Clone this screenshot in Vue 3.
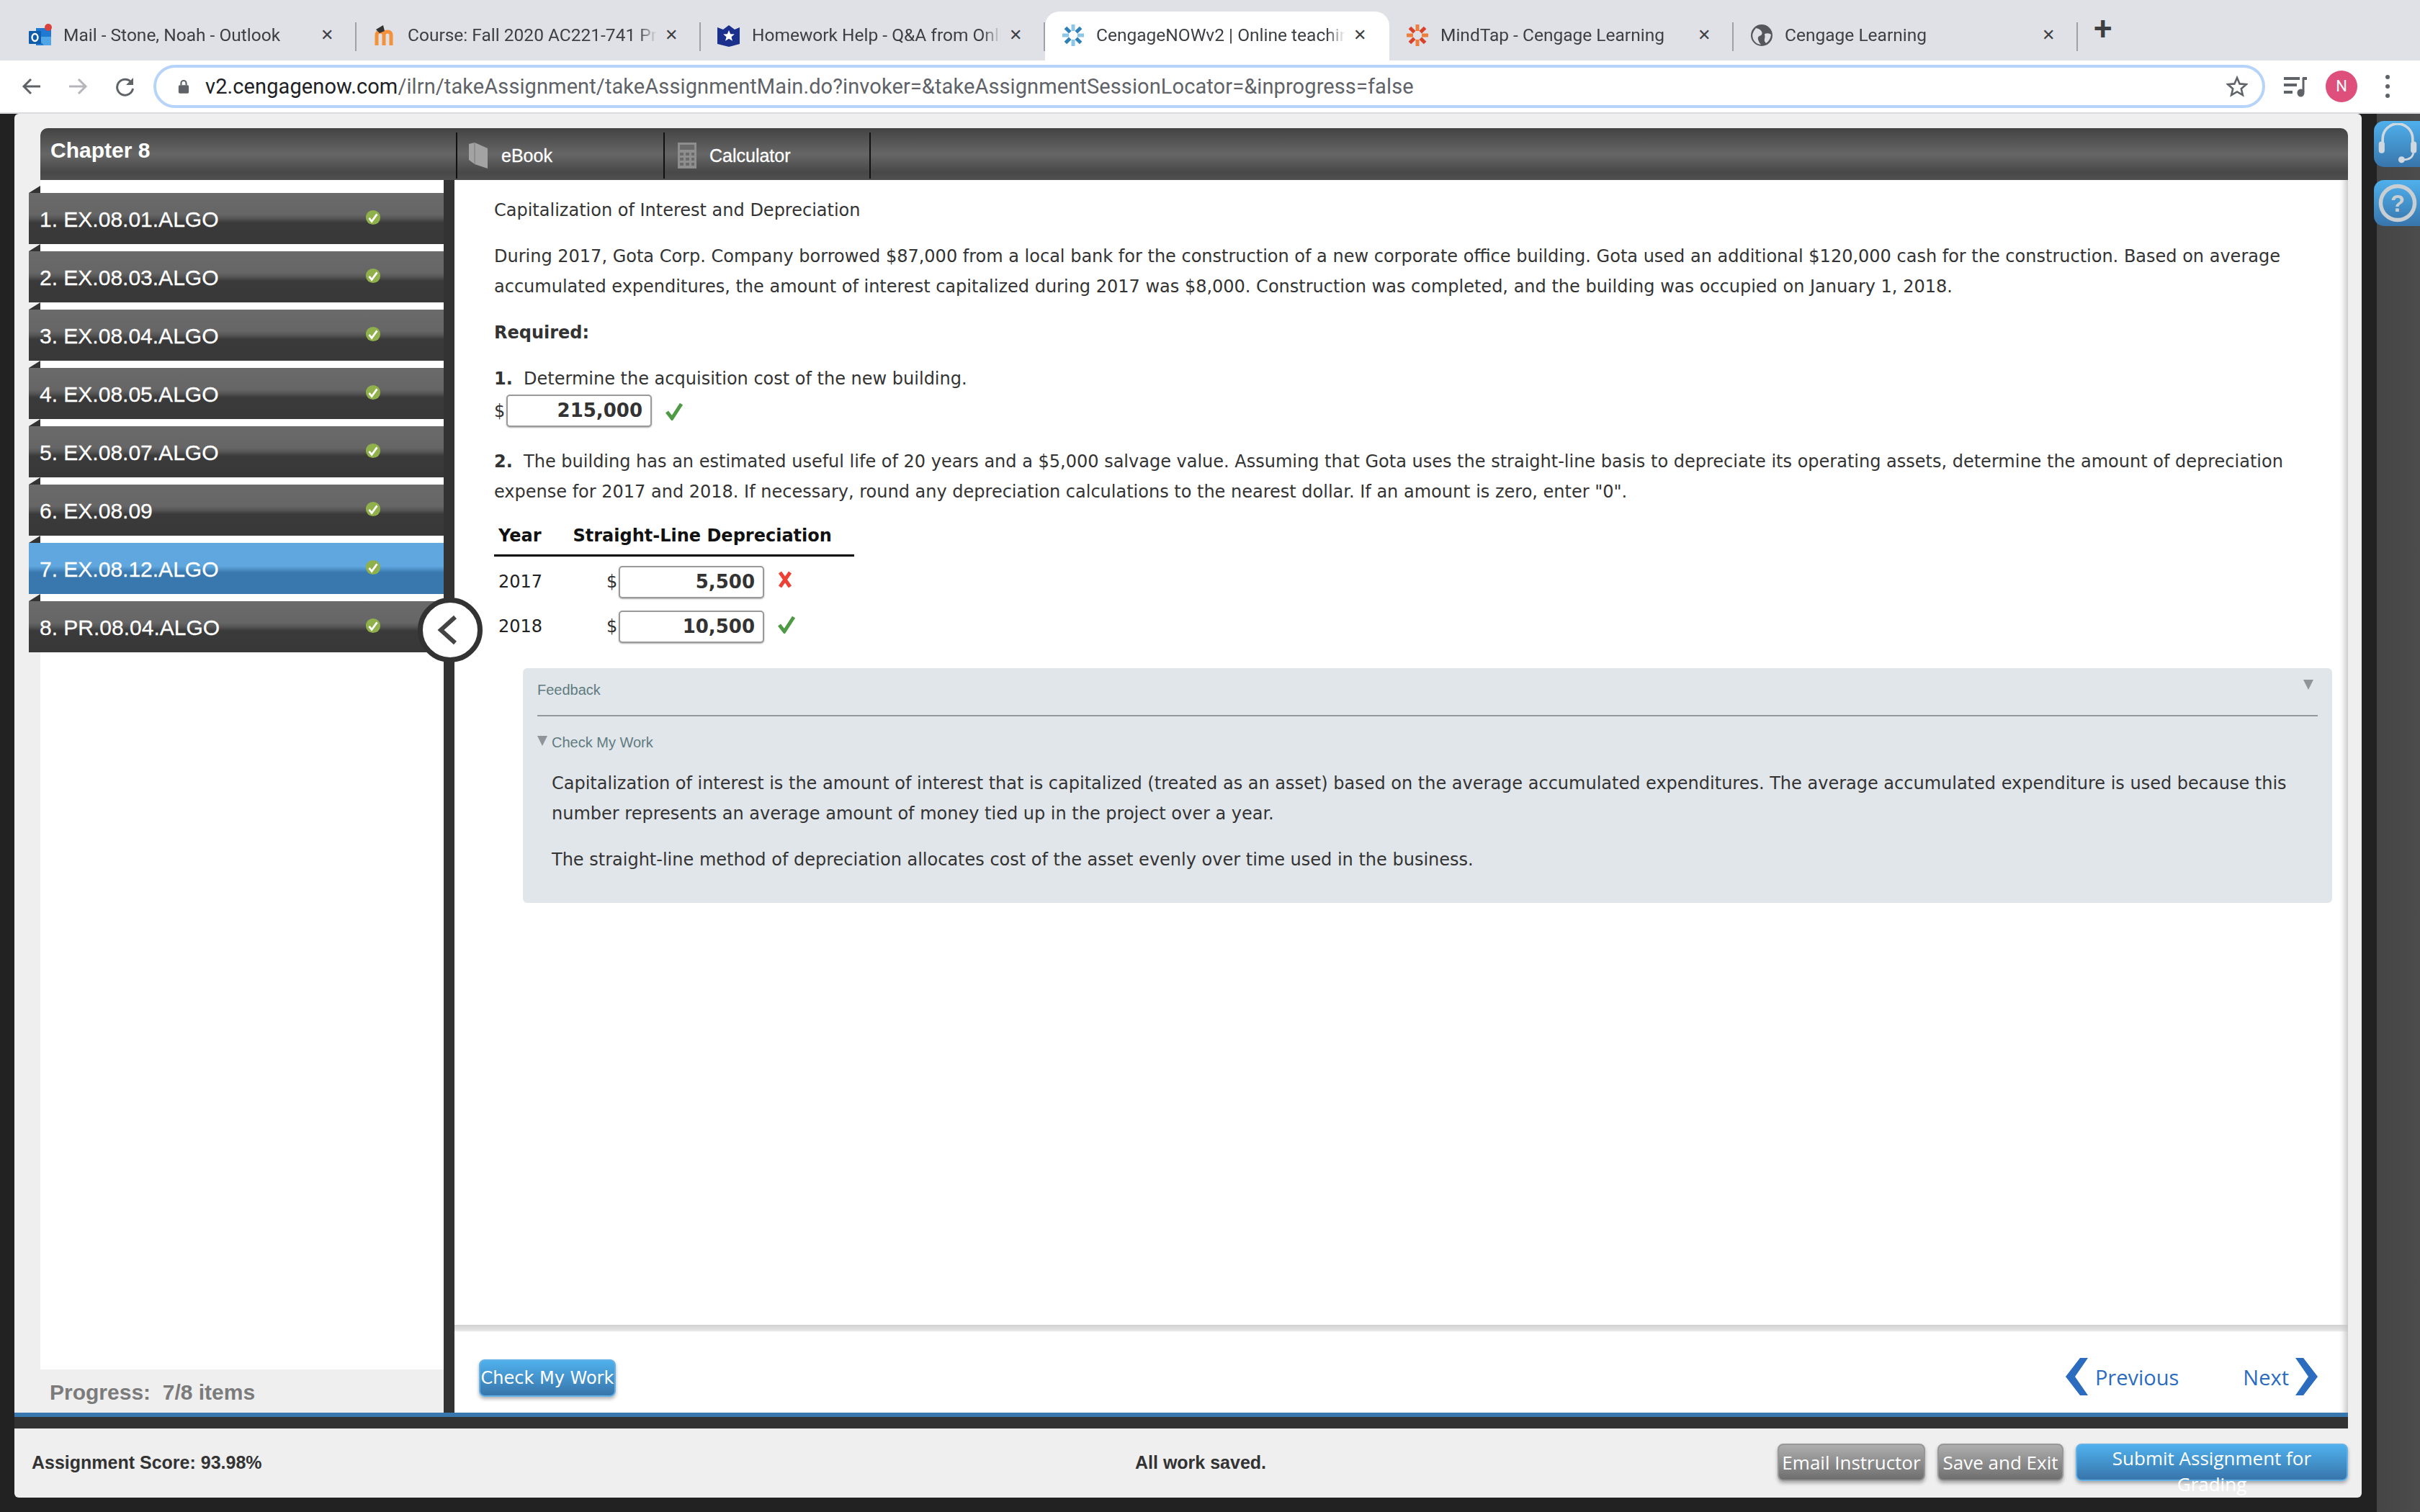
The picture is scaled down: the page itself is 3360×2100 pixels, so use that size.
<script setup>
import { ref } from 'vue';

const tabs = ref([
  { title: 'Mail - Stone, Noah - Outlook', icon: 'outlook' },
  { title: 'Course: Fall 2020 AC221-741 Principles', icon: 'moodle' },
  { title: 'Homework Help - Q&A from Online Tutors', icon: 'shield' },
  { title: 'CengageNOWv2 | Online teaching', icon: 'spark', active: true },
  { title: 'MindTap - Cengage Learning', icon: 'sparkred' },
  { title: 'Cengage Learning', icon: 'globe' },
]);

const items = ref([
  '1. EX.08.01.ALGO',
  '2. EX.08.03.ALGO',
  '3. EX.08.04.ALGO',
  '4. EX.08.05.ALGO',
  '5. EX.08.07.ALGO',
  '6. EX.08.09',
  '7. EX.08.12.ALGO',
  '8. PR.08.04.ALGO',
]);

const sparkAngles = [0, 45, 90, 135, 180, 225, 270, 315];
</script>

<template>
  <div class="screen">
    <div class="tabstrip">
      <div v-for="tab in tabs" :key="tab.title" class="tab" :class="{ active: tab.active }">
        <svg class="favicon" viewBox="0 0 32 32">
          <template v-if="tab.icon === 'outlook'">
            <rect x="10" y="6" width="21" height="24" fill="#1f78d1" />
            <path d="M10 18l11 12h10V18z" fill="#50a5e6" />
            <rect x="0" y="10" width="17" height="18" rx="1" fill="#0f5ca8" />
            <ellipse cx="8.5" cy="19" rx="4" ry="5" fill="none" stroke="#fff" stroke-width="2.4" />
            <circle cx="27" cy="5" r="5" fill="#d9423c" />
          </template>
          <template v-else-if="tab.icon === 'moodle'">
            <path d="M5 30V16q0-5 5-5t5 5v14M15 16q0-5 5-5t5 5v14" fill="none" stroke="#f3923a" stroke-width="5" />
            <path d="M4 8l10-6 2 8-7 3z" fill="#333" />
          </template>
          <template v-else-if="tab.icon === 'shield'">
            <path d="M0 5l8 3 8-6 8 6 7-3v23l-15 4-16-4z" fill="#1b2f8c" />
            <path d="M16 9l2.2 5.2 5.6.4-4.3 3.6 1.4 5.5L16 20.800l-4.900 2.900 1.400-5.500-4.300-3.600 5.600-.4z" fill="#fff" />
          </template>
          <template v-else-if="tab.icon === 'spark' || tab.icon === 'sparkred'">
            <rect
              v-for="a in sparkAngles"
              :key="a"
              x="13.500"
              y="1"
              width="5"
              height="9"
              :fill="tab.icon === 'spark' ? (a % 90 ? '#2f7fb8' : '#8cc6e8') : (a % 90 ? '#d9412b' : '#ef7d3c')"
              :transform="`rotate(${a} 16 16)`"
            />
          </template>
          <template v-else>
            <circle cx="16" cy="16" r="15" fill="#54575c" />
            <path d="M8 6q6 1 8 5t-3 6q-3 1-2 5t4 7q-8-1-11-8t4-15zM20 14q6-2 9 1-1 8-7 12-3-3-2-6t0-7z" fill="#dfe1e6" />
          </template>
        </svg>
        <span class="tab-title">{{ tab.title }}</span>
        <span class="tab-close">✕</span>
      </div>
      <span class="newtab">+</span>
    </div>

    <div class="toolbar">
      <svg class="nav-icon" viewBox="0 0 28 28">
        <path d="M26 14H4M13 4L3 14l10 10" fill="none" stroke="#5f6368" stroke-width="3" />
      </svg>
      <svg class="nav-icon fwd" viewBox="0 0 28 28">
        <path d="M2 14h22M15 4l10 10-10 10" fill="none" stroke="#b4b6b9" stroke-width="3" />
      </svg>
      <svg class="nav-icon reload" viewBox="0 0 28 28">
        <path d="M23 8a11 11 0 1 0 2.500 9" fill="none" stroke="#5f6368" stroke-width="3" />
        <path d="M26 2v10H16z" fill="#5f6368" />
      </svg>
      <div class="omnibox">
        <svg class="lock" viewBox="0 0 18 24">
          <path d="M5 10V7a4 4 0 0 1 8 0v3" fill="none" stroke="#5f6368" stroke-width="2.400" />
          <rect x="1" y="10" width="16" height="13" rx="2" fill="#5f6368" />
        </svg>
        <span class="url"><b>v2.cengagenow.com</b>/ilrn/takeAssignment/takeAssignmentMain.do?invoker=&amp;takeAssignmentSessionLocator=&amp;inprogress=false</span>
        <svg class="star" viewBox="0 0 30 30">
          <path d="M15 3l3.600 8.400 9.100.8-6.900 6 2.100 8.900L15 22.400l-7.900 4.700 2.100-8.900-6.900-6 9.100-.8z" fill="none" stroke="#5f6368" stroke-width="2.600" />
        </svg>
      </div>
      <svg class="queue" viewBox="0 0 32 32">
        <path d="M0 3h22v4H0zM0 12h18v4H0zM0 22h12v4H0z" fill="#5f6368" />
        <path d="M27 4v20" stroke="#5f6368" stroke-width="3" />
        <path d="M26 3h6v4h-6z" fill="#5f6368" />
        <ellipse cx="23.500" cy="25" rx="5" ry="5.500" fill="#5f6368" />
      </svg>
      <span class="avatar">N</span>
      <span class="menu"><i></i><i></i><i></i></span>
    </div>

    <div class="page">
      <div class="panel">
        <div class="header">
          <div class="chapter">Chapter 8</div>
          <div class="tool ebook">
            <svg class="tool-icon" viewBox="0 0 26 36">
              <path d="M0 2l8-2 18 8v28L8 30 0 24z" fill="#a3a3a3" />
              <path d="M8 0v30" stroke="#777" stroke-width="1" />
            </svg>
            <span>eBook</span>
          </div>
          <div class="tool calc">
            <svg class="tool-icon" viewBox="0 0 26 36">
              <rect width="26" height="36" fill="#8e8e8e" />
              <rect x="3" y="3" width="20" height="7" fill="#6a6a6a" />
              <path d="M3 14h5v4H3zM11 14h5v4h-5zM19 14h4v4h-4zM3 21h5v4H3zM11 21h5v4h-5zM19 21h4v4h-4zM3 28h5v4H3zM11 28h5v4h-5zM19 28h4v4h-4z" fill="#6a6a6a" />
            </svg>
            <span>Calculator</span>
          </div>
        </div>

        <div class="workspace">
          <aside class="sidebar">
            <div class="list">
              <div v-for="(item, i) in items" :key="item" class="item" :class="{ current: i === 6 }">
                <span class="item-label">{{ item }}</span>
                <svg class="done" viewBox="0 0 24 24">
                  <circle cx="12" cy="12" r="11" fill="#8fb04a" />
                  <path d="M6 13l4 5 8-11" fill="none" stroke="#fff" stroke-width="3" />
                </svg>
              </div>
            </div>
            <div class="progress">Progress:&nbsp; 7/8 items</div>
          </aside>

          <main class="main">
            <div class="question">
              <p class="line">Capitalization of Interest and Depreciation</p>
              <p class="line gap">During 2017, Gota Corp. Company borrowed $87,000 from a local bank for the construction of a new corporate office building. Gota used an additional $120,000 cash for the construction. Based on average accumulated expenditures, the amount of interest capitalized during 2017 was $8,000. Construction was completed, and the building was occupied on January 1, 2018.</p>
              <p class="line gap"><b>Required:</b></p>
              <p class="line gap"><b>1.</b>&nbsp; Determine the acquisition cost of the new building.</p>
              <div class="answer single">
                <span class="dollar">$</span><span class="field">215,000</span>
                <svg class="mark" viewBox="0 0 24 24"><path d="M2 13l7 9L22 2" fill="none" stroke="#4f9a44" stroke-width="5" /></svg>
              </div>
              <p class="line part">
                <b>2.</b>&nbsp; The building has an estimated useful life of 20 years and a $5,000 salvage value. Assuming that Gota uses the straight-line basis to depreciate its operating assets, determine the amount of depreciation expense for 2017 and 2018. If necessary, round any depreciation calculations to the nearest dollar. If an amount is zero, enter "0".
              </p>
              <div class="table">
                <div class="thead"><b>Year</b><b>Straight-Line Depreciation</b></div>
                <div class="row">
                  <span class="year">2017</span>
                  <span class="dollar">$</span><span class="field">5,500</span>
                  <svg class="mark wrong" viewBox="0 0 20 24"><path d="M3 2l14 20M17 2L3 22" fill="none" stroke="#ee4136" stroke-width="5" /></svg>
                </div>
                <div class="row">
                  <span class="year">2018</span>
                  <span class="dollar">$</span><span class="field">10,500</span>
                  <svg class="mark" viewBox="0 0 24 24"><path d="M2 13l7 9L22 2" fill="none" stroke="#4f9a44" stroke-width="5" /></svg>
                </div>
              </div>

              <section class="feedback">
                <div class="fb-head"><span>Feedback</span><i class="tri"></i></div>
                <div class="fb-sub"><i class="tri"></i><span>Check My Work</span></div>
                <p class="line">Capitalization of interest is the amount of interest that is capitalized (treated as an asset) based on the average accumulated expenditures. The average accumulated expenditure is used because this number represents an average amount of money tied up in the project over a year.</p>
                <p class="line gap">The straight-line method of depreciation allocates cost of the asset evenly over time used in the business.</p>
              </section>
            </div>

            <div class="nav">
              <button class="btn blue check" type="button">Check My Work</button>
              <div class="pager">
                <svg class="chev" viewBox="0 0 31 52"><path d="M20 0h11L13 26l18 26H20L0 26z" fill="#2b6cbf" /></svg>
                <a class="prev">Previous</a>
                <a class="next">Next</a>
                <svg class="chev" viewBox="0 0 31 52"><path d="M11 0H0l18 26L0 52h11l20-26z" fill="#2b6cbf" /></svg>
              </div>
            </div>
          </main>

          <button class="collapse" type="button" aria-label="Collapse">
            <svg viewBox="0 0 30 44"><path d="M25 4L5 22l20 18" fill="none" stroke="#444" stroke-width="6" /></svg>
          </button>
        </div>

        <div class="strip"></div>

        <footer class="footer">
          <strong class="score">Assignment Score: 93.98%</strong>
          <strong class="saved">All work saved.</strong>
          <div class="actions">
            <button class="btn gray email" type="button">Email Instructor</button>
            <button class="btn gray save" type="button">Save and Exit</button>
            <button class="btn blue submit" type="button">Submit Assignment for Grading</button>
          </div>
        </footer>
      </div>

      <div class="rail">
        <button class="side-btn" type="button" aria-label="Support">
          <svg viewBox="0 0 64 64">
            <path d="M9 34V24a23 23 0 0 1 46 0v10" fill="none" stroke="#cfd8de" stroke-width="4" />
            <rect x="3" y="28" width="9" height="18" rx="4" fill="#cfd8de" />
            <rect x="52" y="28" width="9" height="18" rx="4" fill="#cfd8de" />
            <path d="M56 46q-2 10-15 10" fill="none" stroke="#cfd8de" stroke-width="3" />
            <circle cx="38" cy="56" r="5" fill="#cfd8de" />
          </svg>
        </button>
        <button class="side-btn" type="button" aria-label="Help">
          <svg viewBox="0 0 64 64">
            <circle cx="32" cy="32" r="26" fill="none" stroke="#c9ced2" stroke-width="6" />
            <text x="32" y="45" text-anchor="middle" class="qmark">?</text>
          </svg>
        </button>
      </div>
    </div>
  </div>
</template>

<style>
html,
body {
  margin: 0;
  background: #222;
}
</style>

<style scoped>
.screen {
  width: 3360px;
  height: 2100px;
  display: flex;
  flex-direction: column;
  overflow: hidden;
  font-family: "DejaVu Sans", sans-serif;
  color: #333;
}

/* browser chrome */
.tabstrip {
  height: 84px;
  flex: none;
  display: flex;
  align-items: flex-end;
  box-sizing: border-box;
  padding-left: 17px;
  background: #dfe1e6;
  font-family: Roboto, "Liberation Sans", sans-serif;
}
.tab {
  width: 478px;
  height: 68px;
  flex: none;
  box-sizing: border-box;
  display: flex;
  align-items: center;
  padding: 0 22px 0 23px;
  position: relative;
  font-size: 24.500px;
  color: #3c4043;
}
.tab::after {
  content: "";
  position: absolute;
  right: 0;
  top: 15px;
  height: 40px;
  width: 2px;
  background: #9ea1a6;
}
.tab.active {
  background: #fff;
  border-radius: 20px 20px 0 0;
}
.tab.active::after {
  display: none;
}
.favicon {
  width: 32px;
  height: 32px;
  flex: none;
  margin-top: -2px;
}
.tab-title {
  flex: 1;
  min-width: 0;
  margin-left: 16px;
  margin-right: 10px;
  margin-top: -3px;
  white-space: nowrap;
  overflow: hidden;
  -webkit-mask-image: linear-gradient(to left, transparent 0, #000 26px);
  mask-image: linear-gradient(to left, transparent 0, #000 26px);
}
.tab-close {
  width: 20px;
  flex: none;
  margin-right: 9px;
  margin-top: -3px;
  font-size: 22px;
  text-align: center;
  color: #3c4043;
}
.newtab {
  margin: 0 0 15px 22px;
  font-size: 46px;
  line-height: 60px;
  font-weight: 500;
  color: #3c4043;
}

.toolbar {
  height: 74px;
  flex: none;
  box-sizing: border-box;
  border-bottom: 2px solid #dadce0;
  background: #fff;
  display: flex;
  align-items: center;
  padding-left: 30px;
}
.nav-icon {
  width: 28px;
  height: 28px;
  flex: none;
}
.fwd {
  margin-left: 36px;
}
.reload {
  margin-left: 37px;
}
.omnibox {
  width: 932px;
  flex: 1 0 auto;
  max-width: 2932px;
  height: 60px;
  margin-left: 26px;
  box-sizing: border-box;
  border: 4px solid #b6d3f9;
  border-radius: 30px;
  display: flex;
  align-items: center;
  padding-left: 30px;
  font-family: Roboto, "Liberation Sans", sans-serif;
}
.lock {
  width: 16px;
  height: 22px;
  flex: none;
}
.url {
  margin-left: 22px;
  flex: 1;
  font-size: 29px;
  letter-spacing: 0.1px;
  color: #5f6368;
  white-space: nowrap;
}
.url b {
  font-weight: 400;
  color: #202124;
}
.star {
  width: 30px;
  height: 30px;
  margin-right: 20px;
  flex: none;
}
.queue {
  width: 32px;
  height: 32px;
  flex: none;
  margin-left: 26px;
}
.avatar {
  width: 44px;
  height: 44px;
  flex: none;
  margin-left: 26px;
  border-radius: 50%;
  background: #de4f7c;
  color: #fff;
  font: 400 22px/44px Roboto, sans-serif;
  text-align: center;
}
.menu {
  margin-left: 39px;
  width: 6px;
  flex: none;
  display: flex;
  flex-direction: column;
  gap: 7px;
}
.menu i {
  width: 6px;
  height: 6px;
  border-radius: 50%;
  background: #5f6368;
}

/* page */
.page {
  flex: 1;
  min-height: 0;
  display: flex;
  background: linear-gradient(to right, #222 0, #222 3300px, #454545 3300px, #4c4c4c 3360px);
}
.panel {
  width: 3259px;
  height: 1922px;
  margin-left: 20px;
  flex: none;
  background: #efefef;
  border-radius: 6px;
  display: flex;
  flex-direction: column;
  padding: 20px 19px 0 0;
  box-sizing: border-box;
}
.header {
  height: 72px;
  flex: none;
  margin-left: 36px;
  display: flex;
  border-radius: 10px 10px 0 0;
  background: linear-gradient(#434343 0, #666 50%, #484848 85%, #505050 100%);
  color: #fff;
  font-family: "Liberation Sans", sans-serif;
}
.chapter {
  width: 577px;
  box-sizing: border-box;
  flex: none;
  padding: 14px 0 0 14px;
  font-size: 30px;
  line-height: 34px;
  font-weight: 700;
}
.tool {
  width: 288px;
  height: 64px;
  margin-top: 6px;
  flex: none;
  box-sizing: border-box;
  border-left: 2px solid #111;
  display: flex;
  align-items: center;
  font-size: 25px;
  font-weight: 400;
  -webkit-text-stroke: 0.3px #fff;
}
.tool.calc {
  border-right: 2px solid #111;
}
.tool-icon {
  width: 26px;
  height: 36px;
  flex: none;
  margin-left: 16px;
  margin-right: 18px;
}
.tool.calc .tool-icon {
  margin-left: 18px;
  margin-right: 18px;
}
.tool.ebook span {
  margin-left: 1px;
}

.workspace {
  flex: 1;
  min-height: 0;
  display: flex;
  position: relative;
}
.sidebar {
  width: 596px;
  flex: none;
  display: flex;
  flex-direction: column;
  box-sizing: border-box;
  padding-left: 36px;
  font-family: "Liberation Sans", sans-serif;
}
.list {
  flex: 1;
  background: #fff;
  padding-top: 18px;
  display: flex;
  flex-direction: column;
  gap: 10px;
}
.item {
  margin-left: -16px;
  height: 71px;
  flex: none;
  position: relative;
  display: flex;
  align-items: center;
  padding: 0 0 0 15px;
  background: linear-gradient(#6a6a6a 0, #666 42%, #555 50%, #3a3a3a 58%, #383838 100%);
  color: #fff;
  font-size: 30px;
  -webkit-text-stroke: 0.3px #fff;
}
.item::before {
  content: "";
  position: absolute;
  left: 0;
  top: -10px;
  border-left: 16px solid transparent;
  border-bottom: 10px solid #333;
  width: 0;
  height: 0;
}
.item.current {
  background: linear-gradient(#5fa7de 0, #5fa7de 46%, #3878ae 58%, #3878ae 100%);
}
.item-label {
  width: 452px;
  flex: none;
  margin-top: 2px;
}
.done {
  width: 22px;
  height: 22px;
  flex: none;
  margin-top: -4px;
}
.progress {
  height: 60px;
  flex: none;
  box-sizing: border-box;
  padding: 14px 0 0 13px;
  font-size: 30px;
  line-height: 36px;
  font-weight: 700;
  color: #7b7b7b;
}

.main {
  flex: 1;
  min-width: 0;
  display: flex;
  flex-direction: column;
  background: #fff;
  border-left: 15px solid #333;
  box-shadow: inset -10px 0 8px -6px #c4c4c4;
}
.question {
  flex: 1;
  min-height: 0;
  padding: 21px 10px 0 55px;
  font-size: 24px;
  line-height: 42px;
  color: #333;
}
.line {
  margin: 0;
  width: 2520px;
}
.gap {
  margin-top: 22px;
}
.part {
  margin-top: 27px;
}
.answer {
  display: flex;
  align-items: center;
}
.single {
  height: 45px;
  margin-top: 1px;
}
.dollar {
  width: 17px;
  flex: none;
}
.field {
  width: 202px;
  height: 45px;
  box-sizing: border-box;
  flex: none;
  border: 2px solid #9a9a9a;
  border-radius: 5px;
  background: #fff;
  padding-right: 11px;
  text-align: right;
  font-size: 26px;
  line-height: 40px;
  font-weight: 700;
  color: #333;
  box-shadow: 0 1px 2px #aaa;
}
.mark {
  width: 24px;
  height: 26px;
  margin-left: 19px;
  flex: none;
}
.mark.wrong {
  width: 20px;
  height: 24px;
}
.table {
  width: 500px;
  margin-top: 18px;
}
.thead {
  height: 51px;
  display: flex;
  gap: 44px;
  padding-left: 6px;
  border-bottom: 3px solid #000;
  box-sizing: border-box;
  color: #111;
  line-height: 44px;
}
.row {
  height: 62px;
  display: flex;
  align-items: center;
  padding-top: 8px;
  box-sizing: border-box;
}
.row .year {
  width: 156px;
  padding-left: 6px;
  box-sizing: border-box;
  color: #222;
}
.row .dollar {
  width: 17px;
}
.row .mark {
  margin-top: -6px;
}

.feedback {
  width: 2512px;
  height: 326px;
  margin-top: 31px;
  margin-left: 40px;
  box-sizing: border-box;
  padding: 0 20px 0 20px;
  background: #e1e6ea;
  border-radius: 6px;
}
.feedback .line {
  width: auto;
  padding-left: 20px;
}
.fb-head {
  height: 65px;
  border-bottom: 2px solid #92989b;
  box-sizing: content-box;
  display: flex;
  justify-content: space-between;
  align-items: flex-start;
  padding-top: 0;
  font: 400 20px/60px "Liberation Sans", sans-serif;
  color: #5f7b7f;
}
.fb-head .tri {
  margin-top: 16px;
  margin-right: 6px;
}
.tri {
  display: block;
  width: 0;
  height: 0;
  border-left: 7px solid transparent;
  border-right: 7px solid transparent;
  border-top: 14px solid #8f9598;
}
.fb-sub {
  height: 72px;
  display: flex;
  gap: 6px;
  align-items: flex-start;
  font: 400 20px/72px "Liberation Sans", sans-serif;
  color: #5f7b7f;
}
.fb-sub .tri {
  margin-top: 27px;
}

.nav {
  height: 122px;
  flex: none;
  box-sizing: border-box;
  background: linear-gradient(#d2d2d2 0, #e4e4e4 8px, #fff 10px);
  display: flex;
  align-items: flex-start;
  justify-content: space-between;
  padding: 48px 42px 0 34px;
  box-shadow: inset -10px 0 8px -6px #c4c4c4;
}
.btn {
  height: 52px;
  box-sizing: border-box;
  padding: 0;
  border-radius: 8px;
  color: #fff;
  font-family: "Open Sans", "DejaVu Sans", sans-serif;
  font-size: 26px;
  box-shadow: 0 3px 5px rgba(0, 0, 0, 0.3);
}
.blue {
  border: 2px solid #62b2e8;
  background: linear-gradient(#4fb0ec, #3875ab);
}
.gray {
  border: 2px solid #989898;
  background: linear-gradient(#aeaeae, #6e6e6e);
}
.check {
  width: 190px;
  font-family: "DejaVu Sans", sans-serif;
  font-size: 24px;
}
.pager {
  display: flex;
  align-items: center;
  height: 52px;
  margin-top: -2px;
  font-family: "Open Sans", sans-serif;
  font-size: 29px;
  color: #2b6cbf;
}
.chev {
  width: 31px;
  height: 52px;
  flex: none;
}
.prev {
  margin-left: 10px;
}
.next {
  margin-left: 89px;
  margin-right: 9px;
}

.collapse {
  position: absolute;
  left: 560px;
  top: 580px;
  width: 90px;
  height: 90px;
  padding: 0;
  box-sizing: border-box;
  border: 7px solid #333;
  border-radius: 50%;
  background: #fff;
  display: flex;
  align-items: center;
  justify-content: center;
}
.collapse svg {
  width: 30px;
  height: 44px;
  margin-right: 6px;
}

.strip {
  height: 22px;
  flex: none;
  box-sizing: border-box;
  border-top: 6px solid #3878ae;
  background: #333;
}
.footer {
  height: 96px;
  flex: none;
  display: flex;
  align-items: center;
  font-family: "Liberation Sans", sans-serif;
  font-size: 25px;
  color: #333;
  padding-bottom: 2px;
  box-sizing: border-box;
}
.score {
  width: 1556px;
  flex: none;
  box-sizing: border-box;
  padding-left: 24px;
}
.saved {
  flex: none;
  width: 892px;
}
.actions {
  display: flex;
  gap: 17px;
}
.email {
  width: 205px;
}
.save {
  width: 175px;
}
.submit {
  width: 378px;
}

.rail {
  flex: none;
  width: 64px;
  margin-left: 17px;
  padding-top: 10px;
  display: flex;
  flex-direction: column;
  gap: 18px;
  overflow: hidden;
}
.side-btn {
  width: 80px;
  height: 64px;
  flex: none;
  padding: 0;
  border: none;
  border-radius: 14px 0 0 14px;
  background: linear-gradient(#4fb0ec, #3875ab);
}
.side-btn svg {
  display: block;
  width: 58px;
  height: 58px;
  margin-left: 4px;
}
.qmark {
  font: 700 36px "Liberation Sans", sans-serif;
  fill: #c9ced2;
}
</style>
